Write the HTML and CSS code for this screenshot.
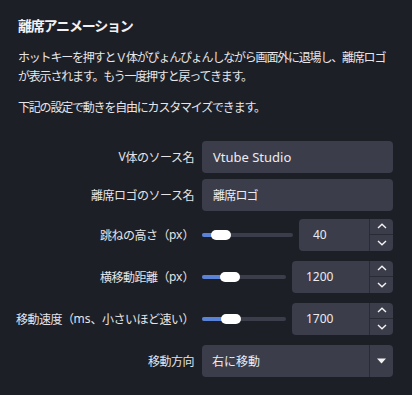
FILE: index.html
```html
<!DOCTYPE html>
<html lang="ja">
<head>
<meta charset="utf-8">
<link rel="stylesheet" href="styles.css">
</head>
<body>
<div class="panel">
  <h1 class="title">離席アニメーション</h1>
  <p class="desc">ホットキーを押すとＶ体がぴょんぴょんしながら画面外に退場し、離席ロゴ<br>が表示されます。もう一度押すと戻ってきます。</p>
  <p class="desc">下記の設定で動きを自由にカスタマイズできます。</p>

  <div class="form">
    <div class="row">
      <div class="label"><span class="lt">V</span>体のソース名</div>
      <div class="field"><span class="lt">Vtube Studio</span></div>
    </div>
    <div class="row r2">
      <div class="label">離席ロゴのソース名</div>
      <div class="field"><span class="jp">離席ロゴ</span></div>
    </div>
    <div class="row r3">
      <div class="label">跳ねの高さ（<span class="lt">px</span>）</div>
      <div class="control">
        <div class="slider">
          <div class="groove"></div>
          <div class="fill" style="width: 14px"></div>
          <div class="handle" style="left: 9px"></div>
        </div>
        <div class="spin">
          <div class="spin-val">40</div>
          <div class="spin-btns">
            <div class="spin-btn"><svg width="10" height="6" viewBox="0 0 10 6"><polyline points="1,5 5,1.2 9,5" fill="none" stroke="#f2f2f2" stroke-width="1.4"/></svg></div>
            <div class="spin-btn down"><svg width="10" height="6" viewBox="0 0 10 6"><polyline points="1,1 5,4.8 9,1" fill="none" stroke="#f2f2f2" stroke-width="1.4"/></svg></div>
          </div>
        </div>
      </div>
    </div>
    <div class="row r4">
      <div class="label">横移動距離（<span class="lt">px</span>）</div>
      <div class="control">
        <div class="slider">
          <div class="groove"></div>
          <div class="fill" style="width: 24px"></div>
          <div class="handle" style="left: 18px"></div>
        </div>
        <div class="spin wide">
          <div class="spin-val">1200</div>
          <div class="spin-btns">
            <div class="spin-btn"><svg width="10" height="6" viewBox="0 0 10 6"><polyline points="1,5 5,1.2 9,5" fill="none" stroke="#f2f2f2" stroke-width="1.4"/></svg></div>
            <div class="spin-btn down"><svg width="10" height="6" viewBox="0 0 10 6"><polyline points="1,1 5,4.8 9,1" fill="none" stroke="#f2f2f2" stroke-width="1.4"/></svg></div>
          </div>
        </div>
      </div>
    </div>
    <div class="row r4">
      <div class="label">移動速度（<span class="lt">ms</span>、小さいほど速い）</div>
      <div class="control">
        <div class="slider">
          <div class="groove"></div>
          <div class="fill" style="width: 25px"></div>
          <div class="handle" style="left: 19px"></div>
        </div>
        <div class="spin wide">
          <div class="spin-val">1700</div>
          <div class="spin-btns">
            <div class="spin-btn"><svg width="10" height="6" viewBox="0 0 10 6"><polyline points="1,5 5,1.2 9,5" fill="none" stroke="#f2f2f2" stroke-width="1.4"/></svg></div>
            <div class="spin-btn down"><svg width="10" height="6" viewBox="0 0 10 6"><polyline points="1,1 5,4.8 9,1" fill="none" stroke="#f2f2f2" stroke-width="1.4"/></svg></div>
          </div>
        </div>
      </div>
    </div>
    <div class="row r4">
      <div class="label">移動方向</div>
      <div class="field combo">
        <span class="combo-text">右に移動</span>
        <div class="combo-arrow"><svg width="9" height="6" viewBox="0 0 9 6"><polygon points="0,0.5 9,0.5 4.5,5.5" fill="#f2f2f2"/></svg></div>
      </div>
    </div>
  </div>
</div>
</body>
</html>
```

FILE: styles.css
```css
html, body {
  margin: 0;
  padding: 0;
  background: #1d1f26;
}

body {
  font-family: "Noto Sans", "Noto Sans CJK JP", sans-serif;
  color: #e6e6ea;
  width: 412px;
  height: 395px;
  overflow: hidden;
}

.panel {
  padding: 15px 19px 0 18px;
}

.title {
  margin: 0;
  font-family: "Noto Sans CJK JP", sans-serif;
  font-size: 14px;
  font-weight: 700;
  line-height: 20px;
  letter-spacing: -1.2px;
  color: #f2f2f4;
}

.desc {
  margin: 12px 0 0;
  font-family: "Noto Sans CJK JP", sans-serif;
  font-size: 12px;
  line-height: 19px;
  letter-spacing: -1.2px;
  white-space: nowrap;
}

.form {
  margin-top: 24.5px;
  display: flex;
  flex-direction: column;
}

.row {
  display: flex;
  align-items: center;
  height: 32px;
}

.r2 { margin-top: 6px; }
.r3 { margin-top: 8px; }
.r4 { margin-top: 10px; }

.label {
  width: 184px;
  flex: none;
  padding-right: 8px;
  box-sizing: border-box;
  display: flex;
  justify-content: flex-end;
  white-space: nowrap;
  font-family: "Noto Sans CJK JP", sans-serif;
  font-size: 12px;
  letter-spacing: -0.5px;
  color: #e4e4e8;
}

.lt {
  font-family: "Noto Sans", sans-serif;
  letter-spacing: 0;
}

.label .lt {
  font-size: 12px;
}

.field {
  flex: 1;
  height: 32px;
  box-sizing: border-box;
  background: #3b3d4a;
  border-radius: 4px;
  padding-left: 11px;
  display: flex;
  align-items: center;
  font-size: 13px;
  color: #ececf0;
}

.jp {
  font-family: "Noto Sans CJK JP", sans-serif;
  font-size: 12px;
  letter-spacing: -0.8px;
}

.control {
  flex: 1;
  display: flex;
  align-items: center;
  gap: 6px;
}

.slider {
  flex: 1;
  position: relative;
  height: 10px;
}

.groove {
  position: absolute;
  left: 0;
  right: 0;
  top: 3px;
  height: 4px;
  border-radius: 2px;
  background: #3b3d4a;
}

.fill {
  position: absolute;
  left: 0;
  top: 3px;
  height: 4px;
  border-radius: 2px;
  background: #5a82d6;
}

.handle {
  position: absolute;
  top: 0;
  width: 20px;
  height: 10px;
  border-radius: 5px;
  background: #ffffff;
}

.spin {
  width: 94px;
  height: 32px;
  flex: none;
  display: flex;
  background: #3b3d4a;
  border-radius: 4px;
  overflow: hidden;
}

.spin.wide {
  width: 101px;
}

.spin-val {
  flex: 1;
  padding-left: 14px;
  display: flex;
  align-items: center;
  font-size: 12px;
  color: #ececf0;
}

.spin-btns {
  width: 23px;
  border-left: 1px solid #2a2c35;
  display: flex;
  flex-direction: column;
}

.spin-btn {
  flex: 1;
  display: flex;
  align-items: center;
  justify-content: center;
}

.spin-btn.down {
  border-top: 1px solid #2a2c35;
}

.combo {
  padding-left: 10px;
  justify-content: space-between;
}

.combo-text {
  font-family: "Noto Sans CJK JP", sans-serif;
  font-size: 12px;
}

.combo-arrow {
  width: 23px;
  height: 32px;
  border-left: 1px solid #2a2c35;
  display: flex;
  align-items: center;
  justify-content: center;
}
```
